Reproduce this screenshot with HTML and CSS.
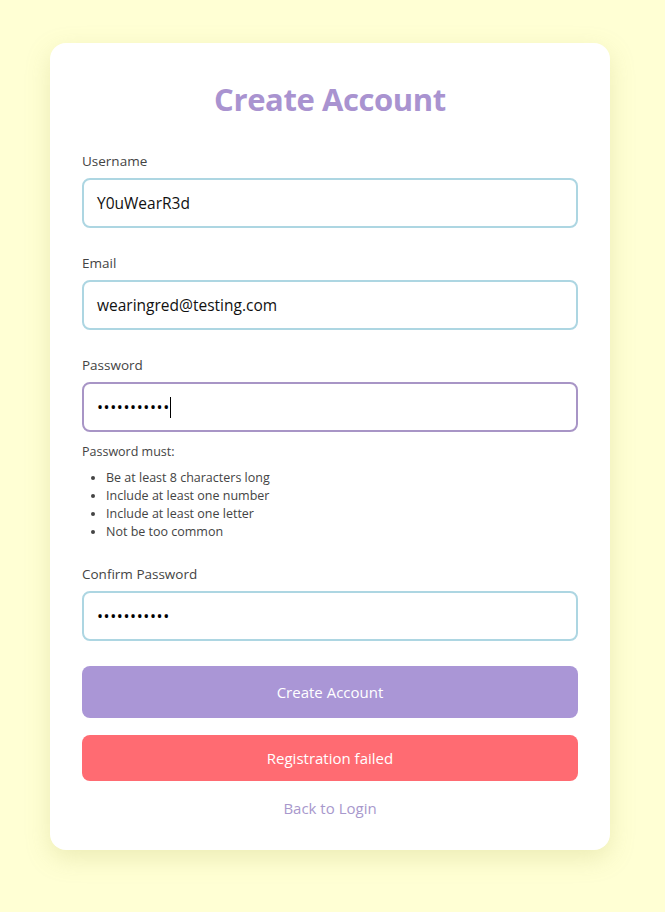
FILE: index.html
```html
<!DOCTYPE html>
<html>
<head>
<meta charset="utf-8">
<link rel="stylesheet" href="styles.css">
</head>
<body>
<div class="page">
  <div class="card">
    <h1 class="title">Create Account</h1>
    <div class="group">
      <label class="label">Username</label>
      <div class="input">Y0uWearR3d</div>
    </div>
    <div class="group">
      <label class="label">Email</label>
      <div class="input">wearingred@testing.com</div>
    </div>
    <div class="group group-pw">
      <label class="label">Password</label>
      <div class="input input-focus"><span class="dots">•••••••••••</span><span class="caret"></span></div>
      <div class="rules">
        <div class="rules-title">Password must:</div>
        <ul class="rules-list">
          <li>Be at least 8 characters long</li>
          <li>Include at least one number</li>
          <li>Include at least one letter</li>
          <li>Not be too common</li>
        </ul>
      </div>
    </div>
    <div class="group group-confirm">
      <label class="label">Confirm Password</label>
      <div class="input"><span class="dots">•••••••••••</span></div>
    </div>
    <button class="btn">Create Account</button>
    <div class="error">Registration failed</div>
    <div class="back">Back to Login</div>
  </div>
</div>
</body>
</html>
```

FILE: styles.css
```css
html, body {
  margin: 0;
  padding: 0;
}
body {
  background: #ffffd4;
  font-family: "Open Sans", "Noto Sans", sans-serif;
  color: #333;
}
.page {
  padding: 43px 55px 62px 50px;
}
.card {
  width: 560px;
  box-sizing: border-box;
  background: #fff;
  border-radius: 16px;
  padding: 32px 32px 32px;
  box-shadow: 0 8px 24px rgba(180, 180, 90, 0.25);
}
.title {
  margin: 4px 0 33px;
  text-align: center;
  font-size: 31px;
  line-height: 40px;
  font-weight: 700;
  color: #a993d0;
  letter-spacing: -0.4px;
}
.group {
  margin-bottom: 26px;
}
.label {
  display: block;
  font-size: 13.5px;
  line-height: 18px;
  color: #444;
  margin-bottom: 8px;
}
.input {
  height: 50px;
  box-sizing: border-box;
  border: 2px solid #add6e2;
  border-radius: 8px;
  padding: 0 13px;
  display: flex;
  align-items: center;
  font-size: 15.5px;
  color: #111;
}
.input-focus {
  border-color: #a895c6;
}
.dots {
  letter-spacing: 0.6px;
  font-size: 16px;
  color: #000;
}
.caret {
  display: inline-block;
  width: 1px;
  height: 21px;
  background: #000;
  margin-left: 0;
}
.group-pw {
  margin-bottom: 24px;
}
.group-confirm {
  margin-bottom: 25px;
}
.rules {
  margin-top: 11px;
  font-size: 12.5px;
  color: #444;
}
.rules-title {
  line-height: 18px;
}
.rules-list {
  margin: 8px 0 0;
  padding-left: 24px;
  line-height: 18px;
}
.btn {
  display: block;
  width: 100%;
  height: 52px;
  border: none;
  border-radius: 8px;
  background: #aa96d6;
  color: #fff;
  font-family: inherit;
  font-size: 15px;
  margin-top: 0;
}
.error {
  margin-top: 17px;
  height: 46px;
  border-radius: 8px;
  background: #ff6b72;
  color: #fff;
  font-size: 15px;
  display: flex;
  align-items: center;
  justify-content: center;
}
.back {
  margin-top: 17px;
  text-align: center;
  font-size: 15px;
  line-height: 20px;
  color: #a898cc;
}
```
